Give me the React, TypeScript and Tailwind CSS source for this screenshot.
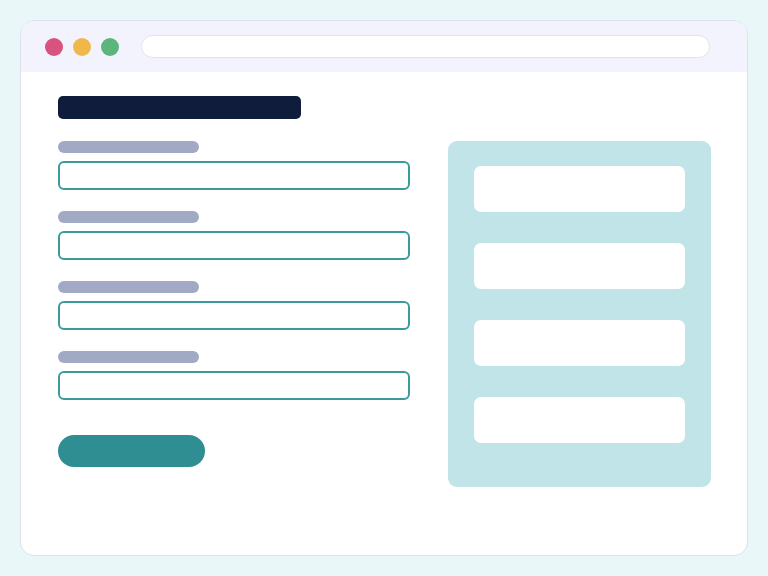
const fields = [1, 2, 3, 4];
const cards = [1, 2, 3, 4];

function Field() {
  return (
    <div className="flex flex-col gap-[8px]">
      <div className="h-[12px] w-[141px] rounded-full bg-[#a1a9c4]" />
      <div className="h-[29px] w-full rounded-[6px] border-2 border-[#3b9b9c] bg-white" />
    </div>
  );
}

export default function App() {
  return (
    <div className="h-[576px] w-[768px] bg-[#e9f7f8] p-[20px] pb-[20px]">
      <div className="flex h-[536px] flex-col overflow-hidden rounded-[14px] border border-[#dde2ee] bg-white">
        {/* browser chrome */}
        <div className="flex h-[51px] shrink-0 items-center gap-[22px] bg-[#f3f3fd] pl-[24px] pr-[37px]">
          <div className="flex items-center gap-[10px]">
            <span className="h-[18px] w-[18px] rounded-full bg-[#d9537f]" />
            <span className="h-[18px] w-[18px] rounded-full bg-[#f0b84b]" />
            <span className="h-[18px] w-[18px] rounded-full bg-[#5cb67b]" />
          </div>
          <div className="h-[23px] flex-1 rounded-full border border-[#e1e2ec] bg-white" />
        </div>

        {/* page body */}
        <div className="flex flex-col pl-[37px] pr-[36px] pt-[24px]">
          <div className="h-[23px] w-[243px] rounded-[5px] bg-[#0f1c3b]" />
          <div className="mt-[22px] flex gap-[38px]">
            <div className="flex w-[352px] flex-col">
              <div className="flex flex-col gap-[21px]">
                {fields.map(f => (
                  <Field key={f} />
                ))}
              </div>
              <div className="mt-[35px] h-[32px] w-[147px] rounded-full bg-[#2e8e91]" />
            </div>
            <div className="flex h-[346px] flex-1 flex-col gap-[31px] rounded-[9px] bg-[#c0e4e7] px-[26px] pt-[25px]">
              {cards.map(c => (
                <div key={c} className="h-[46px] rounded-[7px] bg-white" />
              ))}
            </div>
          </div>
        </div>
      </div>
    </div>
  );
}
